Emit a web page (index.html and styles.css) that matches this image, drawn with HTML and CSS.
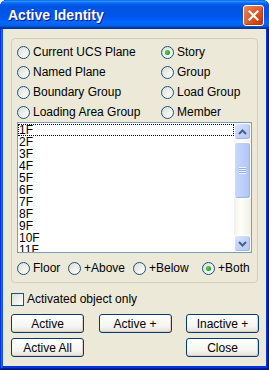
FILE: index.html
```html
<!DOCTYPE html>
<html lang="en">
<head>
    <meta charset="UTF-8">
    <meta name="viewport" content="width=device-width, initial-scale=1.0">
    <title>Active Identity</title>
    <link rel="stylesheet" href="styles.css">
</head>
<body>

<div class="window">
    <div class="titlebar">
        <span class="title">Active Identity</span>
        <button class="close-btn" aria-label="Close">
            <svg width="11" height="11" viewBox="0 0 11 11">
                <path d="M1.5 1.5 L9.5 9.5 M9.5 1.5 L1.5 9.5" stroke="#fff" stroke-width="2.2" stroke-linecap="square"/>
            </svg>
        </button>
    </div>

    <div class="client">
        <div class="groupbox">
            <div class="type-grid">
                <label class="radio"><span class="radio-dot"></span>Current UCS Plane</label>
                <label class="radio checked"><span class="radio-dot"></span>Story</label>
                <label class="radio"><span class="radio-dot"></span>Named Plane</label>
                <label class="radio"><span class="radio-dot"></span>Group</label>
                <label class="radio"><span class="radio-dot"></span>Boundary Group</label>
                <label class="radio"><span class="radio-dot"></span>Load Group</label>
                <label class="radio"><span class="radio-dot"></span>Loading Area Group</label>
                <label class="radio"><span class="radio-dot"></span>Member</label>
            </div>

            <div class="listbox">
                <ul class="list-items" id="storyList"></ul>
                <div class="scrollbar">
                    <div class="sb-btn">
                        <svg width="9" height="6" viewBox="0 0 9 6"><path d="M1 5 L4.5 1.5 L8 5" fill="none" stroke="#4D6185" stroke-width="2"/></svg>
                    </div>
                    <div class="sb-track">
                        <div class="sb-thumb">
                            <span class="grip"></span>
                        </div>
                    </div>
                    <div class="sb-btn">
                        <svg width="9" height="6" viewBox="0 0 9 6"><path d="M1 1 L4.5 4.5 L8 1" fill="none" stroke="#4D6185" stroke-width="2"/></svg>
                    </div>
                </div>
            </div>

            <div class="range-row">
                <label class="radio"><span class="radio-dot"></span>Floor</label>
                <label class="radio"><span class="radio-dot"></span>+Above</label>
                <label class="radio"><span class="radio-dot"></span>+Below</label>
                <label class="radio checked"><span class="radio-dot"></span>+Both</label>
            </div>
        </div>

        <label class="check"><span class="check-box"></span>Activated object only</label>

        <div class="buttons">
            <button class="btn">Active</button>
            <button class="btn">Active +</button>
            <button class="btn">Inactive +</button>
            <button class="btn">Active All</button>
            <span></span>
            <button class="btn">Close</button>
        </div>
    </div>
</div>

<script>
    const list = document.getElementById('storyList');
    for (let i = 1; i <= 11; i++) {
        const li = document.createElement('li');
        li.textContent = i + 'F';
        if (i === 1) li.className = 'focused';
        list.appendChild(li);
    }
</script>

</body>
</html>
```

FILE: styles.css
```css
body {
    margin: 0;
    font-family: 'Liberation Sans', Arial, sans-serif;
    font-size: 12px;
}
.window {
    width: 269px;
    height: 370px;
    display: flex;
    flex-direction: column;
    background-color: #0831d9;
    box-shadow: inset -1px -1px #00138c, inset 1px 1px #0831d9,
                inset -2px -2px #001ea0, inset 2px 2px #166aee,
                inset -3px -3px #003bda, inset 3px 3px #0855dd;
    border-radius: 7px 7px 0 0;
    overflow: hidden;
}
.titlebar {
    height: 29px;
    flex: none;
    display: flex;
    justify-content: space-between;
    align-items: center;
    padding: 0 5px 0 8px;
    background: linear-gradient(180deg, #0058ee 0%, #3593ff 4%, #288eff 6%, #127dff 8%,
                #036ffc 10%, #0262ee 14%, #0057e5 20%, #0054e3 24%, #0055eb 56%,
                #005bf5 66%, #026afe 76%, #0062ef 86%, #0052d6 92%, #0040ab 94%, #003092 100%);
    box-sizing: border-box;
}
.title {
    color: white;
    font-weight: bold;
    font-size: 14px;
    text-shadow: 1px 1px #0f1089;
    padding-top: 1px;
}
.close-btn {
    width: 21px;
    height: 21px;
    padding: 0;
    margin-top: 1px;
    border: 1px solid white;
    border-radius: 3px;
    background: radial-gradient(circle at 85% 85%, #c43c0c 0%, #dd5a26 50%, #ee8a62 100%);
    box-shadow: inset -1px -1px 1px #b8360f;
    display: flex;
    align-items: center;
    justify-content: center;
}
.client {
    flex: 1;
    margin: 0 3px 4px;
    background-color: #ece9d8;
    padding: 9px 8px 0;
}
.groupbox {
    border: 1px solid #d0d0bf;
    border-radius: 4px;
    padding: 3px 5px 4px;
}
.type-grid {
    display: grid;
    grid-template-columns: 144px auto;
}
.radio, .check {
    display: flex;
    align-items: center;
    gap: 3px;
    height: 20px;
    white-space: nowrap;
}
.radio-dot {
    width: 11px;
    height: 11px;
    border: 1px solid #1c5180;
    border-radius: 50%;
    background: linear-gradient(135deg, #dcdcd7 0%, #f2f2ef 60%, #ffffff 100%);
    display: flex;
    align-items: center;
    justify-content: center;
    flex: none;
}
.checked .radio-dot::after {
    content: '';
    width: 5px;
    height: 5px;
    border-radius: 50%;
    background: radial-gradient(circle at 40% 40%, #55d551 0%, #21a121 70%, #1a7f1a 100%);
}
.listbox {
    height: 129px;
    border: 1px solid #7f9db9;
    background-color: white;
    display: flex;
}
.list-items {
    flex: 1;
    list-style: none;
    margin: 0;
    padding: 1px 0 0;
    overflow: hidden;
}
.list-items li {
    height: 12px;
    line-height: 12px;
    padding-left: 1px;
}
.list-items li.focused {
    outline: 1px dotted #000;
    outline-offset: -1px;
}
.scrollbar {
    width: 17px;
    display: flex;
    flex-direction: column;
    background: linear-gradient(90deg, #f3f1ec 0%, #fefefb 40%, #f1efe2 100%);
}
.sb-btn {
    height: 15px;
    border: 1px solid #fff;
    border-radius: 3px;
    background: linear-gradient(135deg, #dce6fd 0%, #c1d3fb 50%, #b3c8f6 100%);
    box-shadow: inset -1px -1px #a0b6e8;
    display: flex;
    align-items: center;
    justify-content: center;
}
.sb-track {
    flex: 1;
    padding-top: 2px;
}
.sb-thumb {
    height: 55px;
    border: 1px solid #fff;
    border-radius: 3px;
    background: linear-gradient(90deg, #c9d8fc 0%, #bccffa 50%, #b1c5f6 100%);
    box-shadow: inset -1px -1px #9eb4e6;
    display: flex;
    align-items: center;
    justify-content: center;
}
.grip {
    width: 7px;
    height: 7px;
    background: repeating-linear-gradient(180deg, #eef4fe 0, #eef4fe 1px, #8cb0f8 1px, #8cb0f8 2px);
}
.range-row {
    display: grid;
    grid-template-columns: 51px 65px 69px auto;
    margin-top: 5px;
}
.check {
    margin-top: 6px;
}
.check-box {
    width: 11px;
    height: 11px;
    border: 1px solid #1c5180;
    background: linear-gradient(135deg, #dcdcd7 0%, #f2f2ef 60%, #ffffff 100%);
    flex: none;
}
.buttons {
    display: grid;
    grid-template-columns: repeat(3, 73px);
    column-gap: 14.5px;
    row-gap: 5px;
    margin-top: 5px;
}
.btn {
    height: 19px;
    padding: 0;
    border: 1px solid #003c74;
    border-radius: 3px;
    background: linear-gradient(180deg, #ffffff 0%, #f4f4f0 70%, #e3e1d6 100%);
    box-shadow: inset -1px -1px #d6d0c5;
    font-family: 'Liberation Sans', Arial, sans-serif;
    font-size: 12px;
    color: black;
}
```
